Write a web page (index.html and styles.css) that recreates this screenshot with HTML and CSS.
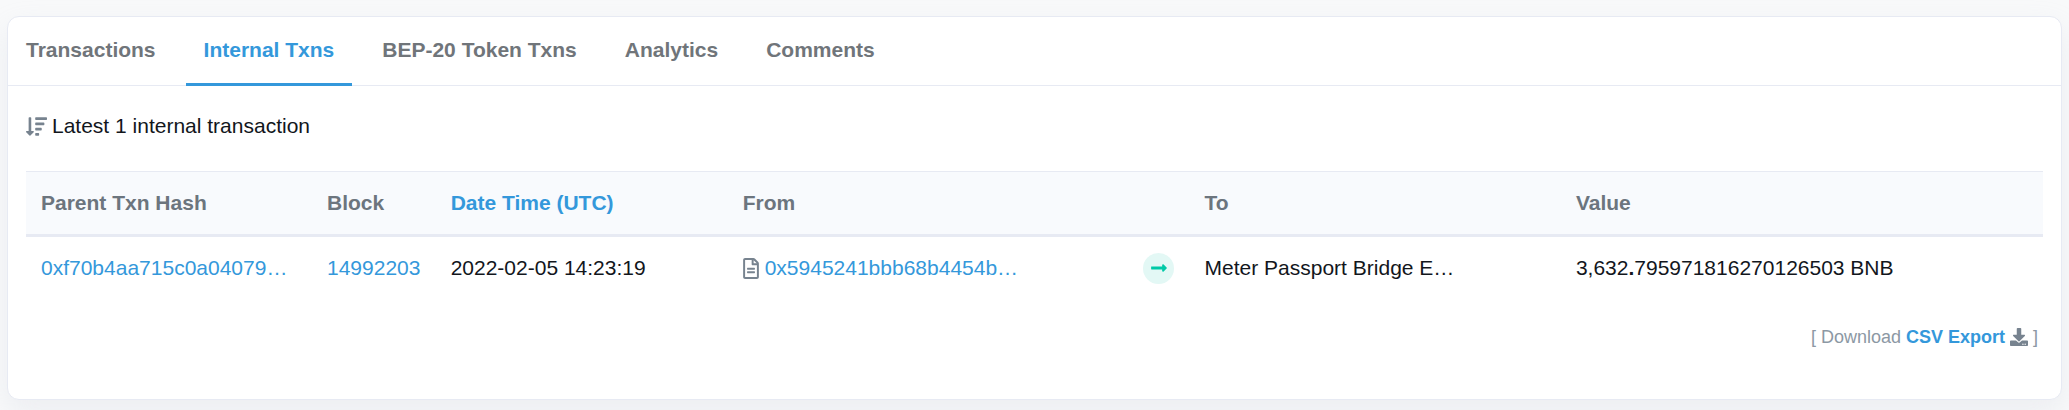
FILE: index.html
```html
<!DOCTYPE html>
<html lang="en">
<head>
<meta charset="utf-8">
<title>Internal Transactions</title>
<link rel="stylesheet" href="styles.css">
</head>
<body>
<main class="card">
  <nav class="tabs" aria-label="Address details">
    <a class="tab" href="#transactions">Transactions</a>
    <a class="tab tab-active" href="#internaltx" aria-current="page">Internal Txns</a>
    <a class="tab" href="#tokentxns">BEP-20 Token Txns</a>
    <a class="tab" href="#analytics">Analytics</a>
    <a class="tab" href="#comments">Comments</a>
  </nav>
  <section class="card-body">
    <p class="summary">
      <svg class="icon icon-sort" viewBox="0 0 512 512" aria-hidden="true"><path d="M187.298 395.314l-79.984 80.002c-6.248 6.247-16.383 6.245-22.627 0L4.705 395.314C-5.365 385.244 1.807 368 16.019 368H64V48c0-8.837 7.163-16 16-16h32c8.837 0 16 7.163 16 16v320h47.984c14.241 0 21.363 17.264 11.314 27.314zM240 96h256c8.837 0 16-7.163 16-16V48c0-8.837-7.163-16-16-16H240c-8.837 0-16 7.163-16 16v32c0 8.837 7.163 16 16 16zm-16 112v-32c0-8.837 7.163-16 16-16h192c8.837 0 16 7.163 16 16v32c0 8.837-7.163 16-16 16H240c-8.837 0-16-7.163-16-16zm0 256v-32c0-8.837 7.163-16 16-16h64c8.837 0 16 7.163 16 16v32c0 8.837-7.163 16-16 16h-64c-8.837 0-16-7.163-16-16zm0-128v-32c0-8.837 7.163-16 16-16h128c8.837 0 16 7.163 16 16v32c0 8.837-7.163 16-16 16H240c-8.837 0-16-7.163-16-16z"/></svg>
      <span>Latest 1 internal transaction</span>
    </p>
    <table class="txns">
      <colgroup>
        <col class="col-hash"><col class="col-block"><col class="col-date"><col class="col-from"><col class="col-arrow"><col class="col-to"><col class="col-value">
      </colgroup>
      <thead>
        <tr>
          <th scope="col">Parent Txn Hash</th>
          <th scope="col">Block</th>
          <th scope="col"><a href="#age">Date Time (UTC)</a></th>
          <th scope="col">From</th>
          <td></td>
          <th scope="col">To</th>
          <th scope="col">Value</th>
        </tr>
      </thead>
      <tbody>
        <tr>
          <td><a href="#tx">0xf70b4aa715c0a04079…</a></td>
          <td><a href="#block">14992203</a></td>
          <td>2022-02-05 14:23:19</td>
          <td>
            <span class="contract">
              <svg class="icon icon-file" viewBox="0 0 384 512" role="img" aria-label="Contract"><path d="M288 248v28c0 6.600-5.400 12-12 12H108c-6.600 0-12-5.400-12-12v-28c0-6.600 5.400-12 12-12h168c6.600 0 12 5.400 12 12zm-12 72H108c-6.600 0-12 5.400-12 12v28c0 6.600 5.400 12 12 12h168c6.600 0 12-5.400 12-12v-28c0-6.600-5.400-12-12-12zm108-188.100V464c0 26.500-21.500 48-48 48H48c-26.500 0-48-21.500-48-48V48C0 21.500 21.500 0 48 0h204.100C264.800 0 277 5.100 286 14.100L369.900 98c9 8.900 14.100 21.200 14.100 33.900zm-128-80V128h76.100L256 51.900zM336 464V176H232c-13.300 0-24-10.700-24-24V48H48v416h288z"/></svg>
              <a href="#from">0x5945241bbb68b4454b…</a>
            </span>
          </td>
          <td>
            <span class="direction">
              <svg class="icon-arrow" viewBox="0 0 448 512" role="img" aria-label="to"><path d="M313.941 216H12c-6.627 0-12 5.373-12 12v56c0 6.627 5.373 12 12 12h301.941v46.059c0 21.382 25.851 32.090 40.971 16.971l86.059-86.059c9.373-9.373 9.373-24.569 0-33.941l-86.059-86.059c-15.119-15.119-40.971-4.411-40.971 16.971V216z"/></svg>
            </span>
          </td>
          <td>Meter Passport Bridge E…</td>
          <td>3,632<b>.</b>795971816270126503 BNB</td>
        </tr>
      </tbody>
    </table>
    <p class="export">
      <span>[ Download</span>
      <a class="export-link" href="#export">CSV Export</a>
      <svg class="icon icon-download" viewBox="0 0 512 512" aria-hidden="true"><path d="M216 0h80c13.300 0 24 10.700 24 24v168h87.700c17.800 0 26.700 21.500 14.100 34.100L269.700 378.300c-7.500 7.500-19.800 7.500-27.300 0L90.100 226.100c-12.600-12.600-3.700-34.100 14.100-34.100H192V24c0-13.300 10.700-24 24-24zm296 376v112c0 13.300-10.700 24-24 24H24c-13.300 0-24-10.700-24-24V376c0-13.300 10.700-24 24-24h146.700l49 49c20.100 20.100 52.500 20.100 72.600 0l49-49H488c13.300 0 24 10.700 24 24zm-124 88c0-11-9-20-20-20s-20 9-20 20 9 20 20 20 20-9 20-20zm64 0c0-11-9-20-20-20s-20 9-20 20 9 20 20 20 20-9 20-20z"/></svg>
      <span>]</span>
    </p>
  </section>
</main>
</body>
</html>
```
FILE: styles.css
```css
* {
  box-sizing: border-box;
}

body {
  margin: 0;
  padding: 16px 7px 10px;
  background: #f8f9fa;
  color: #12161c;
  font-family: "Liberation Sans", Arial, sans-serif;
  font-size: 21px;
  line-height: 32px;
}

a {
  color: #3498db;
  text-decoration: none;
}

p {
  margin: 0;
}

.card {
  background: #fff;
  border: 1px solid #e7eaf3;
  border-radius: 12px;
  box-shadow: 0 12px 29px rgba(189, 197, 209, 0.2);
}

.tabs {
  display: flex;
  gap: 12px;
  border-bottom: 1px solid #e7eaf3;
}

.tab {
  margin-bottom: -1px;
  padding: 17px 18px;
  border-bottom: 3px solid transparent;
  color: #70757a;
  font-weight: bold;
}

.tab-active {
  border-bottom-color: #3498db;
  color: #3498db;
}

.card-body {
  padding: 24px 18px 46px;
}

.icon {
  flex: none;
  fill: #77838f;
}

.summary {
  display: flex;
  align-items: center;
  gap: 5px;
  margin-bottom: 29px;
}

.icon-sort {
  width: 21px;
  height: 21px;
}

.txns {
  width: 100%;
  table-layout: fixed;
  border-collapse: separate;
  border-spacing: 0;
}

.col-hash { width: 14.18%; }
.col-block { width: 6.13%; }
.col-date { width: 14.48%; }
.col-from { width: 19.85%; }
.col-arrow { width: 3.05%; }
.col-to { width: 18.41%; }
.col-value { width: 23.9%; }

.txns th,
.txns td {
  padding: 15px 0 15px 15px;
  text-align: left;
  white-space: nowrap;
}

.txns thead th,
.txns thead td {
  border-top: 1px solid #e7eaf3;
  border-bottom: 3px solid #e7eaf3;
  background: #f8fafd;
  color: #6c757e;
}

.contract {
  display: flex;
  align-items: center;
  gap: 6px;
}

.icon-file {
  width: 16px;
  height: 21px;
}

.direction {
  display: flex;
  align-items: center;
  justify-content: center;
  width: 31px;
  height: 31px;
  border-radius: 50%;
  background: #e3f8f5;
}

.icon-arrow {
  width: 16px;
  height: 18px;
  fill: #00c9a7;
}

.export {
  display: flex;
  align-items: center;
  justify-content: flex-end;
  gap: 5px;
  margin-top: 22px;
  padding-right: 5px;
  color: #8c98a4;
  font-size: 18px;
}

.export-link {
  font-weight: bold;
}

.icon-download {
  width: 18px;
  height: 18px;
}
```
